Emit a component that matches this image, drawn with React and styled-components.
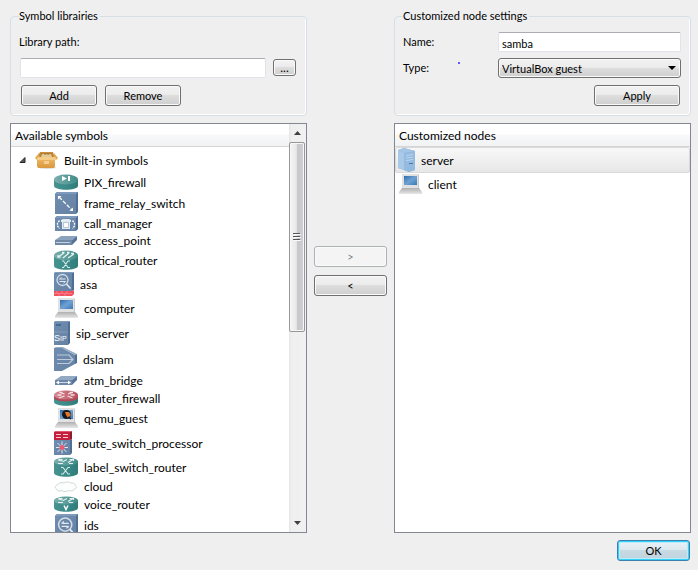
import React, { useState } from "react";
import styled, { createGlobalStyle, css } from "styled-components";

const GlobalStyle = createGlobalStyle`
  * {
    box-sizing: border-box;
  }

  body {
    margin: 0;
    background-color: #efefef;
  }
`;

const uiFont = css`
  font-family: Lato, "Liberation Sans", sans-serif;
  font-size: 11px;
  color: #000000;
`;

const Dialog = styled.form`
  display: grid;
  grid-template-columns: minmax(0, 1fr) 73px minmax(0, 1fr);
  grid-template-rows: auto minmax(0, 1fr) auto;
  gap: 7px;
  height: 100vh;
  padding: 9px 7px 9px 10px;
  ${uiFont}
`;

const GroupBox = styled.fieldset`
  display: grid;
  grid-template-rows: 26px 27px 21px;
  min-width: 0;
  margin: 0;
  padding: 9px 9px 9px 8px;
  border: 1px solid #d5dfe5;
  border-radius: 4px;
  box-shadow: inset -1px -1px 0 #ffffff;
  grid-column: ${(props) => props.$column};
`;

const GroupTitle = styled.legend`
  padding: 0 2px 0 0;
  line-height: 14px;
`;

const FieldRow = styled.div`
  display: flex;
  align-items: flex-start;
`;

const PathRow = styled(FieldRow)`
  gap: 7px;
  padding: 0 1px;
`;

const ButtonRow = styled(FieldRow)`
  gap: 8px;
  justify-content: ${(props) => (props.$end ? "flex-end" : "flex-start")};
  padding: 0 1px 0 2px;
`;

const Label = styled.label`
  line-height: 20px;
`;

const SettingLabel = styled(Label)`
  flex: 0 0 95px;
  display: flex;
`;

const Speck = styled.span`
  width: 2px;
  height: 2px;
  margin: 4px 38px 0 auto;
  background-color: #5a5aff;
`;

const TextField = styled.input`
  ${uiFont}
  flex: 1;
  min-width: 0;
  height: 20px;
  padding: 2px 3px 0;
  background-color: #ffffff;
  border: 1px solid #e2e3ea;
  border-top-color: #abadb3;
  border-radius: 2px;
  outline: none;
`;

const Button = styled.button`
  ${uiFont}
  width: ${(props) => props.$width || "76px"};
  height: 21px;
  padding: 0;
  line-height: 20px;
  border: 1px solid #707070;
  border-radius: 3px;
  background: linear-gradient(#f2f2f2, #ebebeb 49%, #dddddd 50%, #cfcfcf);
  box-shadow: inset 0 0 0 1px #fafafa;

  &:disabled {
    color: #838383;
    border-color: #adb2b5;
    background: #f4f4f4;
  }
`;

const BrowseButton = styled(Button)`
  align-self: flex-start;
  height: 17px;
  margin: 1px 0;
  font-size: 12px;
  line-height: 15px;
`;

const DefaultButton = styled(Button)`
  border-color: #3c7fb1;
  background: linear-gradient(#eaf3f8, #dce8ef 49%, #c8dae4 50%, #bfd3de);
  box-shadow: inset 0 0 0 1px #35d0f5, inset 0 0 0 2px #b8ecf8;
`;

const SelectWrapper = styled.div`
  position: relative;
  flex: 1;
  min-width: 0;

  svg {
    position: absolute;
    top: 8px;
    right: 5px;
    pointer-events: none;
  }
`;

const Select = styled.select`
  ${uiFont}
  display: block;
  width: 100%;
  height: 20px;
  padding: 0 20px 0 3px;
  appearance: none;
  border: 1px solid #707070;
  border-radius: 3px;
  background: linear-gradient(#f2f2f2, #ebebeb 49%, #dddddd 50%, #cfcfcf);
  box-shadow: inset 0 0 0 1px #fafafa;
`;

const Panel = styled.section`
  display: flex;
  min-width: 0;
  border: 1px solid #828790;
  background-color: #ffffff;
  font-size: 12px;
`;

const PanelBody = styled.div`
  flex: 1;
  min-width: 0;
  overflow: hidden;
`;

const PanelHeader = styled.h2`
  height: 23px;
  margin: 0;
  padding-left: 4px;
  border-bottom: 1px solid #d5d5d5;
  background: linear-gradient(#ffffff 45%, #f7f8fa 50%, #f1f2f4);
  font-size: 12px;
  font-weight: 400;
  line-height: 24px;
`;

const List = styled.ul`
  list-style: none;
  margin: 0;
  padding: 0;
`;

const Row = styled.li`
  display: flex;
  align-items: center;
  gap: 6px;
  min-height: 17px;
  padding: 1px 0 1px ${(props) => props.$indent || "3px"};
  line-height: 15px;
  white-space: nowrap;

  svg {
    flex: none;
  }
`;

const RootRow = styled(Row)`
  height: 26px;
  padding-left: 8px;
`;

const NodeRow = styled(Row)`
  ${(props) =>
    props.$selected &&
    css`
      border-radius: 3px;
      background: linear-gradient(#f9f9f9, #e6e6e6);
      box-shadow: inset 0 0 0 1px #d9d9d9;
    `}
`;

const MoveButtons = styled.div`
  display: flex;
  flex-direction: column;
  gap: 8px;
  padding-top: 123px;
`;

const Footer = styled.footer`
  display: flex;
  grid-column: 1 / -1;
  justify-content: flex-end;
  padding-right: 1px;
`;

const ScrollBar = styled.div`
  display: flex;
  flex-direction: column;
  width: 17px;
  padding: 0 1px 0 0;
  background: linear-gradient(90deg, #e6e6e6, #efefef 15%, #f1f1f1);
`;

const ScrollArrow = styled.div`
  display: flex;
  flex: 0 0 18px;
  align-items: center;
  justify-content: center;
`;

const ScrollTrack = styled.div`
  flex: 1;
`;

const ScrollThumb = styled.div`
  display: flex;
  align-items: center;
  justify-content: center;
  height: 51%;
  border: 1px solid #979797;
  border-radius: 2px;
  background: linear-gradient(90deg, #f5f5f5, #e8e8ea 45%, #c6c6ca 55%, #d2d2d5);
  box-shadow: inset 0 0 0 1px #f7f7f7;
`;

const HiddenSvg = styled.svg`
  position: absolute;
`;

const Defs = () => (
  <HiddenSvg width="0" height="0" aria-hidden="true">
    <defs>
      <linearGradient id="blue" x1="0" y1="0" x2="1" y2="1">
        <stop offset="0" stopColor="#6f8db0" />
        <stop offset="1" stopColor="#6682a3" />
      </linearGradient>
      <linearGradient id="teal" x1="0" y1="0" x2="1" y2="0">
        <stop offset="0" stopColor="#479390" />
        <stop offset="0.5" stopColor="#3a8a87" />
        <stop offset="1" stopColor="#2f7c7a" />
      </linearGradient>
      <linearGradient id="tealTop" x1="0" y1="0" x2="1" y2="0">
        <stop offset="0" stopColor="#7bafad" />
        <stop offset="1" stopColor="#3f8c89" />
      </linearGradient>
      <linearGradient id="redTop" x1="0" y1="0" x2="1" y2="0">
        <stop offset="0" stopColor="#d58b94" />
        <stop offset="1" stopColor="#b9505f" />
      </linearGradient>
      <linearGradient id="screen" x1="0" y1="0" x2="1" y2="1">
        <stop offset="0" stopColor="#2f6cae" />
        <stop offset="0.5" stopColor="#6fa2d2" />
        <stop offset="1" stopColor="#3a78b6" />
      </linearGradient>
      <linearGradient id="keys" x1="0" y1="0" x2="0" y2="1">
        <stop offset="0" stopColor="#b0b0b0" />
        <stop offset="1" stopColor="#e6e6e6" />
      </linearGradient>
      <linearGradient id="box" x1="0" y1="0" x2="0" y2="1">
        <stop offset="0" stopColor="#eeb964" />
        <stop offset="1" stopColor="#d9973f" />
      </linearGradient>
    </defs>
  </HiddenSvg>
);

const Svg = ({ w = 24, h, children }) => (
  <svg width={w} height={h} viewBox={`0 0 ${w} ${h}`} aria-hidden="true">
    {children}
  </svg>
);

const BoxIcon = () => (
  <Svg w={23} h={18}>
    <ellipse cx="12" cy="16.500" rx="9" ry="1.500" fill="#dcdcdc" />
    <path d="M2 7h18v8l-1 2H3l-1-2z" fill="url(#box)" />
    <path d="M5 1h13l2 6H2z" fill="#c98f3f" />
    <path d="M6 2h11l1 4H5z" fill="#b07a33" />
    <path d="M7 3h2l1 1 2-1 1 1 2-1h1l1 3H6z" fill="#e3cb98" />
    <path d="M4 2L0 7l2 2h2zM19 2l4 5-2 2h-2z" fill="#e3a850" />
    <path d="M3 6h17l2 3H1z" fill="#f5cb88" />
    <path d="M9 10h5v3H9z" fill="#f3cf94" />
  </Svg>
);

const Cylinder = ({ h, rim = 4, top = "url(#tealTop)", children }) => (
  <Svg h={h}>
    <path
      d={`M0 ${rim}V${h - 4}C1 ${h + 1} 23 ${h + 1} 24 ${h - 4}V${rim}z`}
      fill="url(#teal)"
    />
    <ellipse cx="12" cy={rim + 0.5} rx="12" ry={rim} fill={top} />
    {children}
  </Svg>
);

const routerArrows = (
  <path
    d="M5 3l5 1.500M14 5.500l5-3M15.500 2.500h4v1.500M8.500 2.500H5V4M13 2.500L10 4M4 6.500h5M15 6.500h4"
    fill="none"
    stroke="#e4f1f0"
    strokeWidth="1.200"
  />
);

const PixIcon = () => (
  <Cylinder h={16} rim={5}>
    <path d="M8 2l5 2.500L8 7zM14 2h2v5h-2z" fill="#ffffff" />
  </Cylinder>
);

const XRouterIcon = () => (
  <Cylinder h={20}>
    {routerArrows}
    <path
      d="M7 10.500h2l5 6.500h2M7 17h2l5-6.500h2"
      fill="none"
      stroke="#d9eae9"
      strokeWidth="1.100"
    />
  </Cylinder>
);

const OpticalIcon = () => (
  <Cylinder h={20} rim={5}>
    <path
      d="M4 7l6-4M9 8l6-5M14 8l6-4M10.500 2.500H8M15.500 2.500H13M20 3.500h-3M4 5v2h2.500"
      fill="none"
      stroke="#e4f1f0"
      strokeWidth="1.300"
    />
    <path
      d="M8 11h1.500l4.500 6.500h2M8 17.500h1.500L14 11h2"
      fill="none"
      stroke="#d9eae9"
      strokeWidth="1.100"
    />
  </Cylinder>
);

const VoiceIcon = () => (
  <Cylinder h={16}>
    {routerArrows}
    <path d="M10 9.500l2 4 2-4" fill="none" stroke="#ffffff" strokeWidth="1.500" />
  </Cylinder>
);

const RouterFirewallIcon = () => (
  <Svg h={16}>
    <path d="M0 6v6c1 5 23 5 24 0V6z" fill="url(#teal)" />
    <path d="M0 5v3c1 4.500 23 4.500 24 0V5z" fill="#b04858" />
    <ellipse cx="12" cy="5" rx="12" ry="4.500" fill="url(#redTop)" />
    <path
      d="M6 2.500l4.500 1.500M13.500 6l5 2M18.500 2.500L14 4M10.500 6L5 8M8.500 2.500H5.500M15.500 2.500h3.500M3.500 5h4M16.500 5h4"
      fill="none"
      stroke="#f6e2e5"
      strokeWidth="1.300"
    />
  </Svg>
);

const Tile = ({ h }) => (
  <>
    <path d={`M1 2l2-2h21v${h - 2}l-2 2H1z`} fill="#4f6f95" />
    <path d={`M1 2h21v${h - 2}H1z`} fill="url(#blue)" />
    <path d="M1 2l2-2h21l-2 2z" fill="#7f9abb" />
  </>
);

const FrameRelayIcon = () => (
  <Svg h={22}>
    <Tile h={22} />
    <path
      d="M5 5l13 13"
      stroke="#ffffff"
      strokeWidth="1.300"
      strokeDasharray="4 1.500"
    />
    <path d="M4 4h3.500L4 7.500zM19 19h-3.500l3.500-3.500z" fill="#ffffff" />
  </Svg>
);

const CallManagerIcon = () => (
  <Svg h={15}>
    <Tile h={15} />
    <path d="M7 4l2-1h6l2 1v2h-1v7H8V6H7z" fill="#e3ebf3" />
    <path d="M9.500 6.500h5v5h-5z" fill="#ffffff" stroke="#9db1c8" strokeWidth="0.700" />
    <path
      d="M5.500 4.500L3.500 7v3l2 2.500M18.500 4.500l2 2.500v3l-2 2.500"
      fill="none"
      stroke="#ffffff"
      strokeWidth="1.300"
      strokeDasharray="2 1"
    />
  </Svg>
);

const AccessPointIcon = () => (
  <Svg h={11}>
    <path d="M1 5l6-4h16l-5 4z" fill="#8ba3bd" />
    <path d="M18 5l5-4v4l-5 5z" fill="#55749a" />
    <path d="M1 5h17v5H1z" fill="#7089a6" />
    <path
      d="M2 8l1-1 1 1 1-1 1 1 1-1 1 1 1-1 1 1 1-1 1 1 1-1 1 1 1-1 1 1"
      fill="none"
      stroke="#c3d1e0"
    />
  </Svg>
);

const AtmBridgeIcon = () => (
  <Svg h={11}>
    <path d="M1 5l6-4h16l-5 4z" fill="#93a9c1" />
    <path d="M18 5l5-4v4l-5 5z" fill="#55749a" />
    <path d="M1 5h17v5H1z" fill="#6c87a5" />
    <path d="M4 7.500h11" stroke="#cfdae6" />
    <path d="M2 7.500l3-2v4zM17 7.500l-3-2v4z" fill="#ffffff" />
  </Svg>
);

const Lens = () => (
  <>
    <circle cx="8.500" cy="8" r="5.500" fill="none" stroke="#d3dde7" strokeWidth="1.300" />
    <path d="M12.500 12l4 4.500" stroke="#e6ecf2" strokeWidth="1.500" />
    <path
      d="M5.500 7h6M5.500 9.500h6M7.500 5.500L5.500 7M9.500 11l2-1.500"
      fill="none"
      stroke="#e1e8ef"
    />
  </>
);

const AsaIcon = () => (
  <Svg w={20} h={24}>
    <path d="M0 1h18v18H0z" fill="url(#blue)" />
    <path d="M18 1l2-1v18l-2 1z" fill="#4f6f95" />
    <path d="M0 1l1-1h19l-2 1z" fill="#7f9abb" />
    <Lens />
    <path d="M0 19h18l2-1v4l-2 2H0z" fill="#f2525f" />
    <path
      d="M0 21.500h18M3 19v2M8 19v2M13 19v2M5 22v2M11 22v2"
      stroke="#f98c94"
      strokeWidth="0.700"
    />
  </Svg>
);

const IdsIcon = () => (
  <Svg h={22}>
    <Tile h={22} />
    <g transform="translate(1 1) scale(1.200)">
      <Lens />
    </g>
  </Svg>
);

const Laptop = () => (
  <>
    <path d="M4 0h16v14H4z" fill="#dfe1e3" />
    <path d="M20 0l1 1v13h-1z" fill="#c8c8c8" />
    <path d="M6 2h13v9H6z" fill="url(#screen)" />
    <path d="M4 14h17l3 4v2H1v-2z" fill="url(#keys)" />
    <path d="M1 19h23v1H1z" fill="#e3e3e3" />
  </>
);

const ComputerIcon = () => (
  <Svg h={21}>
    <Laptop />
  </Svg>
);

const QemuIcon = () => (
  <Svg h={21}>
    <Laptop />
    <ellipse cx="12.500" cy="6.500" rx="4.500" ry="4.500" fill="#17181d" />
    <path d="M11 4h4l2 3-3 3-2-3z" fill="#e2762a" />
    <path d="M14 9l3 2" stroke="#17181d" strokeWidth="1.500" />
  </Svg>
);

const SipIcon = () => (
  <Svg w={16} h={24}>
    <path d="M0 1h14v23H0z" fill="url(#blue)" />
    <path d="M14 1l2-1v22l-2 2z" fill="#4f6f95" />
    <path d="M0 1l1-1h15l-2 1z" fill="#7f9abb" />
    <path d="M2 4h5" stroke="#2d5a82" strokeWidth="1.300" />
    <path d="M0 11h14" stroke="#8ea5bf" strokeWidth="0.700" />
    <text x="0" y="20" fontSize="9" fontFamily="Liberation Sans" fill="#ffffff">
      S<tspan fontSize="7">IP</tspan>
    </text>
  </Svg>
);

const DslamIcon = () => (
  <Svg w={23} h={24}>
    <path d="M0 1h8l13 7v9L8 24H0z" fill="url(#blue)" />
    <path d="M0 1l2-1h7l14 7-2 1L8 1z" fill="#93aac2" />
    <path d="M21 8l2-1v9l-2 1z" fill="#4f6f95" />
    <path
      d="M3 8h12l4 4.500-4 4H3M3 12.500h15"
      fill="none"
      stroke="#bccada"
      strokeWidth="1.200"
    />
  </Svg>
);

const RouteSwitchIcon = () => (
  <Svg w={18} h={24}>
    <path d="M0 1h16v8H0z" fill="#c61f3c" />
    <path d="M0 1l1-1h17l-2 1z" fill="#dd5a70" />
    <path d="M16 1l2-1v8l-2 1z" fill="#94192f" />
    <path d="M2 3.500h5M9 3.500h5M2 6.500h5M9 6.500h5" stroke="#f3ccd3" strokeWidth="1.200" />
    <path d="M0 9h16v15H0z" fill="url(#blue)" />
    <path d="M16 9l2-1v14l-2 2z" fill="#4f6f95" />
    <path
      d="M8 10.500v12M2 16.500h12M3.500 12l9 9M12.500 12l-9 9"
      stroke="#dfe7ef"
    />
    <circle cx="8" cy="16.500" r="2.500" fill="#ea5a70" />
  </Svg>
);

const CloudIcon = () => (
  <Svg h={12}>
    <path
      d="M4 3.500C5 1.500 8 1 10 2c2-1.500 5-1.500 6.500 0 2.500-.5 4.500.5 4.500 2 2 1 2 3.500-.5 4-1 2-4 2.500-6 1.500-2 1.500-5 1.500-6.500 0C5.500 10.500 3 10 2.500 8 .5 7 1 4.500 4 3.500z"
      fill="#fdfefe"
      stroke="#ccd9da"
    />
  </Svg>
);

const ServerIcon = () => (
  <Svg w={17} h={24}>
    <path d="M0 2l6-2 11 3v19l-6 2L0 20z" fill="#8fb6dc" />
    <path d="M0 2l6 3v17L0 20z" fill="#a9c9e8" />
    <path d="M6 5l11-2v19l-6 2-5-2z" fill="#94bae0" />
    <path d="M0 2l6-2 11 3L6 5z" fill="#a3c5e6" />
    <path d="M8 7.500l7-1M8 10l7-1M8 12.500l7-1" stroke="#bcd6ee" />
    <path d="M11 15.500h4" stroke="#4a76a4" />
  </Svg>
);

const symbols = [
  { name: "PIX_firewall", Icon: PixIcon },
  { name: "frame_relay_switch", Icon: FrameRelayIcon },
  { name: "call_manager", Icon: CallManagerIcon },
  { name: "access_point", Icon: AccessPointIcon },
  { name: "optical_router", Icon: OpticalIcon },
  { name: "asa", Icon: AsaIcon },
  { name: "computer", Icon: ComputerIcon },
  { name: "sip_server", Icon: SipIcon },
  { name: "dslam", Icon: DslamIcon },
  { name: "atm_bridge", Icon: AtmBridgeIcon },
  { name: "router_firewall", Icon: RouterFirewallIcon },
  { name: "qemu_guest", Icon: QemuIcon },
  { name: "route_switch_processor", Icon: RouteSwitchIcon },
  { name: "label_switch_router", Icon: XRouterIcon },
  { name: "cloud", Icon: CloudIcon },
  { name: "voice_router", Icon: VoiceIcon },
  { name: "ids", Icon: IdsIcon },
];

const nodes = [
  { name: "server", Icon: ServerIcon },
  { name: "client", Icon: ComputerIcon },
];

const App = () => {
  const [path, setPath] = useState("");
  const [name, setName] = useState("samba");
  const [selected, setSelected] = useState("server");

  return (
    <Dialog onSubmit={(e) => e.preventDefault()}>
      <GlobalStyle />
      <Defs />
      <GroupBox $column="1">
        <GroupTitle>Symbol librairies</GroupTitle>
        <FieldRow>
          <Label htmlFor="path">Library path:</Label>
        </FieldRow>
        <PathRow>
          <TextField
            id="path"
            value={path}
            onChange={(e) => setPath(e.target.value)}
          />
          <BrowseButton type="button" $width="23px">
            ...
          </BrowseButton>
        </PathRow>
        <ButtonRow>
          <Button type="button">Add</Button>
          <Button type="button">Remove</Button>
        </ButtonRow>
      </GroupBox>
      <GroupBox $column="3">
        <GroupTitle>Customized node settings</GroupTitle>
        <FieldRow>
          <SettingLabel htmlFor="name">Name:</SettingLabel>
          <TextField
            id="name"
            value={name}
            onChange={(e) => setName(e.target.value)}
          />
        </FieldRow>
        <FieldRow>
          <SettingLabel htmlFor="type">
            Type:
            <Speck />
          </SettingLabel>
          <SelectWrapper>
            <Select id="type" defaultValue="VirtualBox guest">
              <option>VirtualBox guest</option>
            </Select>
            <svg width="8" height="4" viewBox="0 0 8 4" aria-hidden="true">
              <path d="M0 0h8L4 4z" fill="#000000" />
            </svg>
          </SelectWrapper>
        </FieldRow>
        <ButtonRow $end>
          <Button type="button" $width="86px">
            Apply
          </Button>
        </ButtonRow>
      </GroupBox>

      <Panel>
        <PanelBody>
          <PanelHeader>Available symbols</PanelHeader>
          <List>
            <RootRow>
              <svg width="10" height="8" viewBox="0 0 10 8" aria-hidden="true">
                <path d="M6 1.500v5H1z" fill="#595959" stroke="#262626" />
              </svg>
              <BoxIcon />
              Built-in symbols
            </RootRow>
            {symbols.map(({ name, Icon }) => (
              <Row key={name} $indent="43px">
                <Icon />
                {name}
              </Row>
            ))}
          </List>
        </PanelBody>
        <ScrollBar>
          <ScrollArrow>
            <svg width="7" height="4" viewBox="0 0 7 4" aria-hidden="true">
              <path d="M0 4h7L3.500 0z" fill="#404040" />
            </svg>
          </ScrollArrow>
          <ScrollTrack>
            <ScrollThumb>
              <svg width="8" height="9" viewBox="0 0 8 9" aria-hidden="true">
                <path d="M0 1.500h7M0 4.500h7M0 7.500h7" stroke="#555555" />
                <path d="M1 2.500h7M1 5.500h7M1 8.500h7" stroke="#fafafa" />
              </svg>
            </ScrollThumb>
          </ScrollTrack>
          <ScrollArrow>
            <svg width="7" height="4" viewBox="0 0 7 4" aria-hidden="true">
              <path d="M0 0h7L3.500 4z" fill="#404040" />
            </svg>
          </ScrollArrow>
        </ScrollBar>
      </Panel>
      <MoveButtons>
        <Button type="button" $width="100%" disabled>
          &gt;
        </Button>
        <Button type="button" $width="100%">
          &lt;
        </Button>
      </MoveButtons>
      <Panel>
        <PanelBody>
          <PanelHeader>Customized nodes</PanelHeader>
          <List>
            {nodes.map(({ name, Icon }) => (
              <NodeRow
                key={name}
                $selected={selected === name}
                onClick={() => setSelected(name)}
              >
                <Icon />
                {name}
              </NodeRow>
            ))}
          </List>
        </PanelBody>
      </Panel>

      <Footer>
        <DefaultButton type="submit" $width="73px">
          OK
        </DefaultButton>
      </Footer>
    </Dialog>
  );
};

export default App;
